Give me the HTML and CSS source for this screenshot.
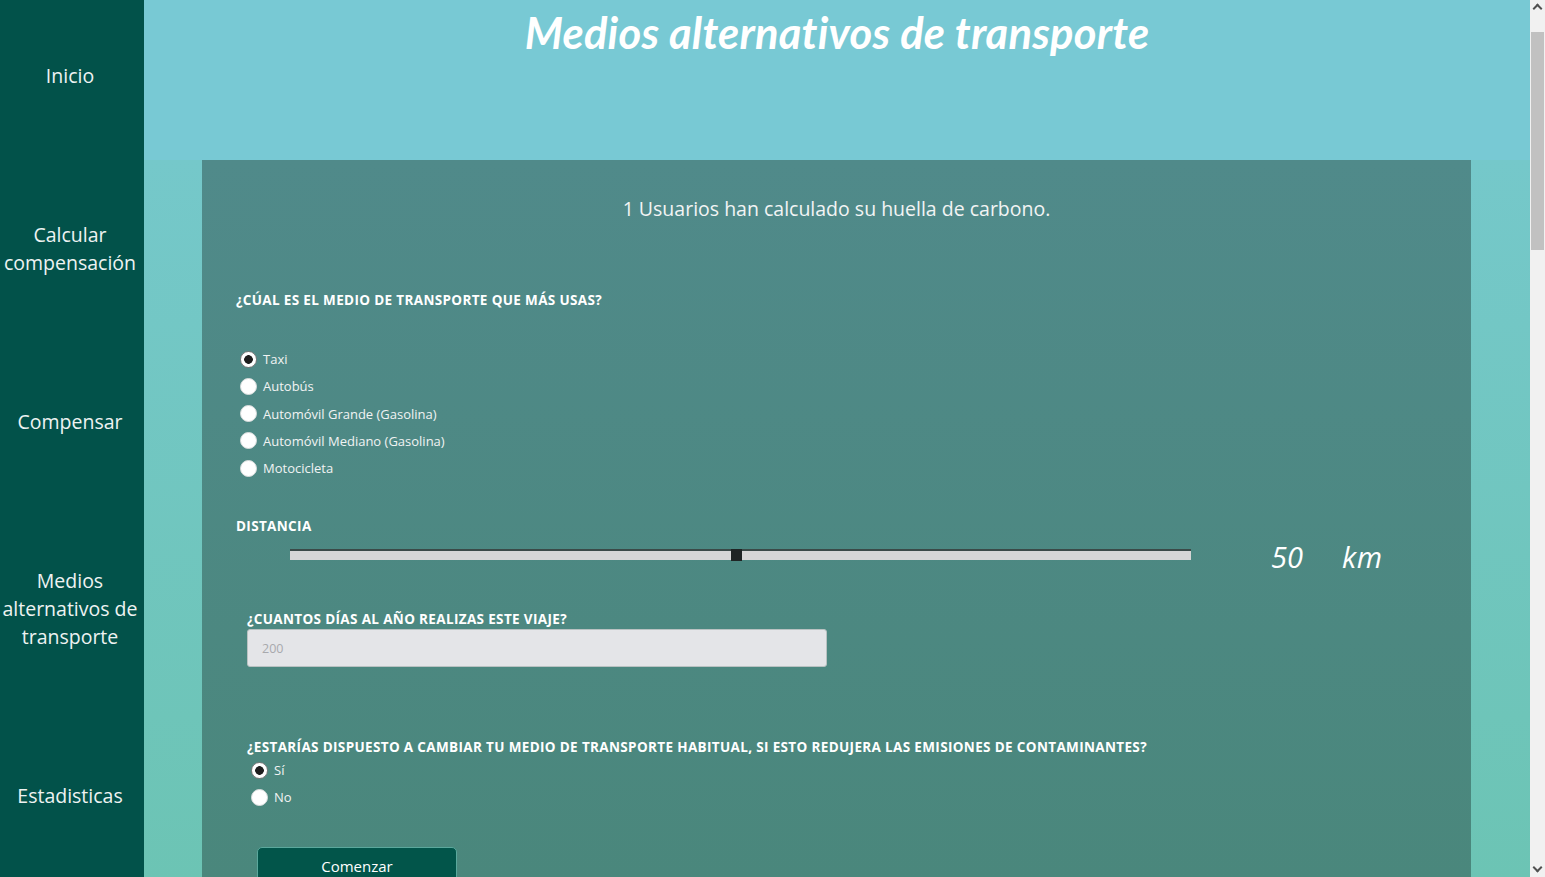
FILE: index.html
```html
<!DOCTYPE html>
<html lang="es">
<head>
<meta charset="utf-8">
<title>Medios alternativos de transporte</title>
<link rel="stylesheet" href="styles.css">
</head>
<body>
<div class="layout">
  <nav class="sidebar">
    <a class="nav-item" href="#">Inicio</a>
    <a class="nav-item" href="#">Calcular<br>compensación</a>
    <a class="nav-item" href="#">Compensar</a>
    <a class="nav-item" href="#">Medios<br>alternativos de<br>transporte</a>
    <a class="nav-item" href="#">Estadisticas</a>
  </nav>
  <main class="main">
    <header class="header">
      <h1 class="title">Medios alternativos de transporte</h1>
    </header>
    <section class="content">
      <div class="card">
        <p class="counter">1 Usuarios han calculado su huella de carbono.</p>

        <h2 class="q q-transport">¿CÚAL ES EL MEDIO DE TRANSPORTE QUE MÁS USAS?</h2>
        <div class="options">
          <label class="opt"><input type="radio" name="medio" checked><span>Taxi</span></label>
          <label class="opt"><input type="radio" name="medio"><span>Autobús</span></label>
          <label class="opt"><input type="radio" name="medio"><span>Automóvil Grande (Gasolina)</span></label>
          <label class="opt"><input type="radio" name="medio"><span>Automóvil Mediano (Gasolina)</span></label>
          <label class="opt"><input type="radio" name="medio"><span>Motocicleta</span></label>
        </div>

        <h2 class="q q-dist">DISTANCIA</h2>
        <div class="slider-row">
          <input class="slider" type="range" min="1" max="100" value="50">
          <div class="dist-value"><span class="num">50</span><span class="unit">km</span></div>
        </div>

        <div class="indent">
          <h2 class="q q-days">¿CUANTOS DÍAS AL AÑO REALIZAS ESTE VIAJE?</h2>
          <input class="days" type="text" placeholder="200">

          <h2 class="q q-change">¿ESTARÍAS DISPUESTO A CAMBIAR TU MEDIO DE TRANSPORTE HABITUAL, SI ESTO REDUJERA LAS EMISIONES DE CONTAMINANTES?</h2>
          <div class="options options-small">
            <label class="opt"><input type="radio" name="cambio" checked><span>Sí</span></label>
            <label class="opt"><input type="radio" name="cambio"><span>No</span></label>
          </div>

          <button class="start" type="button">Comenzar</button>
        </div>
      </div>
    </section>
  </main>
  <div class="scrollbar" aria-hidden="true">
    <span class="sb-arrow sb-up"></span>
    <span class="sb-thumb"></span>
    <span class="sb-arrow sb-down"></span>
  </div>
</div>
</body>
</html>
```

FILE: styles.css
```css
* { box-sizing: border-box; }

html, body {
  margin: 0;
  padding: 0;
}

body {
  font-family: "Open Sans", "Noto Sans", sans-serif;
  color: #f4f6f5;
  background: #6cc4b4;
}

.layout {
  display: grid;
  grid-template-columns: 144px 1fr 15px;
  min-height: 100vh;
}

.sidebar {
  position: sticky;
  top: 0;
  height: 100vh;
  background: #02524a;
  display: flex;
  flex-direction: column;
  align-items: center;
  padding-top: 62px;
  padding-right: 4px;
  gap: 131px;
}

.nav-item {
  display: block;
  color: #eef3f2;
  text-decoration: none;
  text-align: center;
  font-size: 19.5px;
  line-height: 28px;
  white-space: nowrap;
}

.main {
  display: flex;
  flex-direction: column;
  min-width: 0;
}

.header {
  height: 160px;
  background: #78c9d4;
  display: flex;
  justify-content: center;
  align-items: flex-start;
}

.title {
  margin: 6px 0 0;
  font-family: "Lato", "Open Sans", sans-serif;
  font-style: italic;
  font-weight: 700;
  font-size: 43.5px;
  line-height: 52px;
  color: #ffffff;
  letter-spacing: 0.2px;
}

.content {
  background: linear-gradient(180deg, #75c8ca 0px, #6cc4b4 720px);
  padding: 0 59px 0 58px;
}

.card {
  background: linear-gradient(180deg, #508a8a 0px, #4a877c 720px);
  padding: 35px 34px 2400px;
  min-height: 3200px;
}

.counter {
  margin: 0;
  text-align: center;
  font-size: 19.5px;
  line-height: 28px;
  color: #f2f4f4;
}

.q {
  margin: 0;
  font-size: 13.5px;
  line-height: 18px;
  font-weight: 700;
  color: #ffffff;
  letter-spacing: 0.35px;
}

.q-transport { margin-top: 68px; }

.options {
  display: flex;
  flex-direction: column;
  gap: 9.3px;
  margin-top: 41px;
  padding-left: 4px;
}

.opt {
  display: flex;
  align-items: center;
  gap: 6px;
  font-size: 13px;
  line-height: 18px;
  color: #f1f3f3;
}

.opt input {
  appearance: none;
  -webkit-appearance: none;
  margin: 0;
  width: 17px;
  height: 17px;
  border-radius: 50%;
  background: #ffffff;
  border: 1px solid #d9dcdc;
  flex: none;
}

.opt input:checked {
  background: radial-gradient(circle, #1e1e1e 0 4px, #ffffff 4.6px);
  border-color: #7a7a7a;
}

.q-dist { margin-top: 40px; }

.slider-row {
  display: flex;
  align-items: center;
  margin-top: -1px;
  padding-left: 54px;
}

.slider {
  appearance: none;
  -webkit-appearance: none;
  width: 901px;
  height: 11px;
  margin: 0;
  background: #d6d6d6;
  border-top: 2px solid #3b4a48;
  outline: none;
}

.slider::-webkit-slider-thumb {
  appearance: none;
  -webkit-appearance: none;
  width: 11px;
  height: 12px;
  background: #1f2424;
  border: none;
  margin-top: -1px;
}

.dist-value {
  display: flex;
  gap: 39px;
  margin-left: 80px;
  margin-top: 5px;
  font-family: "Open Sans", sans-serif;
  font-style: italic;
  font-size: 29px;
  line-height: 36px;
  color: #ffffff;
}

.unit { letter-spacing: 0.5px; }

.indent {
  padding-left: 11px;
}

.q-days { margin-top: 35px; }

.days {
  display: block;
  width: 580px;
  height: 38px;
  margin-top: 1px;
  background: #e4e5e8;
  border: 1px solid #b9c2c2;
  border-radius: 3px;
  padding: 0 14px;
  font-family: "Open Sans", sans-serif;
  font-size: 12.5px;
  color: #333;
}

.days::placeholder { color: #a8a9ad; }

.q-change { margin-top: 71px; }

.options-small {
  margin-top: 5px;
  gap: 9px;
  padding-left: 4px;
}

.start {
  display: flex;
  align-items: center;
  justify-content: center;
  margin: 41px 0 0 10px;
  width: 200px;
  height: 38px;
  background: #02554a;
  border: 1px solid #5aa89c;
  border-radius: 5px;
  color: #ffffff;
  font-family: "Open Sans", sans-serif;
  font-size: 15px;
  padding: 0;
}

/* page scrollbar, as drawn by the browser in the reference */
.scrollbar {
  position: sticky;
  top: 0;
  height: 100vh;
  background: #f1f1f1;
  display: flex;
  flex-direction: column;
  align-items: center;
}

.sb-arrow {
  flex: none;
  width: 15px;
  height: 16px;
  position: relative;
}

.sb-arrow::before {
  content: "";
  position: absolute;
  left: 4px;
  width: 5px;
  height: 5px;
  border-left: 2px solid #505050;
  border-top: 2px solid #505050;
}

.sb-up::before {
  top: 5px;
  transform: rotate(45deg);
}

.sb-down {
  margin-top: auto;
}

.sb-down::before {
  top: 3px;
  transform: rotate(225deg);
}

.sb-thumb {
  flex: none;
  width: 13px;
  height: 218px;
  margin-top: 16px;
  background: #c1c1c1;
}
```
